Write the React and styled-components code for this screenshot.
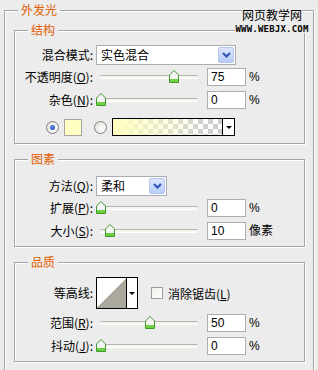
import React from 'react';
import styled, {createGlobalStyle} from 'styled-components';

const GlobalStyle = createGlobalStyle`
html, body {
    margin: 0;
    padding: 0;
    background: #ececec;
}
body {
    font-family: "Noto Sans CJK SC", "Liberation Sans", sans-serif;
    font-size: 12px;
    color: #000;
}
`;

const Page = styled.div`
position: relative;
width: 318px;
height: 370px;
overflow: hidden;
box-sizing: border-box;
padding: 10px 0 0 4px;
`;

const Frame = styled.div`
position: relative;
border: 1px solid #a4a4a4;
box-shadow: inset 1px 1px 0 #fff, 1px 1px 0 #fff;
`;

const Outer = styled(Frame)`
width: 310px;
box-sizing: border-box;
padding: 19px 8px 14px 9px;
display: flex;
flex-direction: column;
`;

const Section = styled(Frame)`
padding: ${p => p.$pt}px 0 ${p => p.$pb}px 0;
display: flex;
flex-direction: column;
& + & {
    margin-top: 15px;
}
`;

const Title = styled.span`
position: absolute;
left: 13px;
top: -8px;
padding: 0 3px;
line-height: 14px;
background: #ececec;
color: #e35d00;
`;

const Row = styled.div`
display: flex;
align-items: center;
height: ${p => p.$h}px;
margin-top: ${p => p.$mt || 0}px;
padding-left: ${p => p.$pl || 0}px;
`;

const Label = styled.span`
width: 78px;
flex-shrink: 0;
margin-right: 3px;
text-align: right;
white-space: nowrap;
line-height: 14px;
u {
    text-underline-offset: 1px;
}
`;

const SelectBox = styled.div`
width: ${p => p.$w}px;
height: 20px;
box-sizing: border-box;
border: 1px solid #a9adb3;
background: #fff;
display: flex;
align-items: center;
justify-content: space-between;
padding: 0 1px 0 4px;
line-height: 14px;
`;

const SelectButton = styled.div`
width: 16px;
height: 16px;
box-sizing: border-box;
border: 1px solid #b3c5ef;
border-radius: 2px;
background: linear-gradient(#dce6fd, #b8ccf8);
display: flex;
align-items: center;
justify-content: center;
`;

const SliderBox = styled.div`
position: relative;
width: 106px;
height: 14px;
margin-right: 5px;
display: flex;
align-items: center;
`;

const Track = styled.div`
flex: 1;
margin: 0 4px;
height: 2px;
border-radius: 2px;
background: #f6f6ec;
border-top: 1px solid #b4b4b4;
border-bottom: 1px solid #fff;
`;

const Thumb = styled.svg`
position: absolute;
top: 0;
`;

const NumBox = styled.div`
width: 39px;
height: 18px;
box-sizing: border-box;
border: 1px solid #adadad;
background: #fff;
padding-left: 3px;
font: 12px/16px "Liberation Sans", sans-serif;
`;

const Unit = styled.span`
margin-left: 3px;
font-family: "Liberation Sans", "Noto Sans CJK SC", sans-serif;
font-size: 12px;
line-height: 14px;
`;

const Radio = styled.span`
width: 13px;
height: 13px;
box-sizing: border-box;
border-radius: 50%;
border: 1px solid #808080;
background: radial-gradient(circle at 65% 65%, #fff, #dcdcd6);
display: flex;
align-items: center;
justify-content: center;
margin-right: 5px;
&::after {
    content: '';
    width: 5px;
    height: 5px;
    border-radius: 50%;
    background: ${p => p.$on ? 'radial-gradient(circle at 40% 40%, #5a86e8, #1f46b0)' : 'transparent'};
}
`;

const Swatch = styled.span`
width: 18px;
height: 17px;
box-sizing: border-box;
border: 1px solid #a4a4a4;
background: #ffffc4;
margin-right: 12px;
`;

const GradientBox = styled.div`
width: 123px;
height: 18px;
box-sizing: border-box;
border: 1px solid #000;
display: flex;
`;

const GradientFill = styled.div`
flex: 1;
background:
    linear-gradient(to right, #ffffc0 0%, rgba(255, 255, 192, 0) 85%),
    conic-gradient(#cfcfcf 25%, #fff 0 50%, #cfcfcf 0 75%, #fff 0) 0 0 / 10px 10px;
`;

const DropArrow = styled.div`
width: ${p => p.$w}px;
border-left: 1px solid #000;
background: #fff;
display: flex;
align-items: center;
justify-content: center;
&::after {
    content: '';
    border-left: 3px solid transparent;
    border-right: 3px solid transparent;
    border-top: 3px solid #000;
}
`;

const Contour = styled.div`
width: 42px;
height: 32px;
box-sizing: border-box;
border: 1px solid #000;
display: flex;
margin-right: 13px;
`;

const ContourCurve = styled.div`
flex: 1;
background: linear-gradient(to bottom right, #fff 50%, #aba99e 50%);
`;

const CheckBox = styled.span`
width: 12px;
height: 12px;
box-sizing: border-box;
border: 1px solid #9c9c9c;
background: linear-gradient(135deg, #f0f0ea, #fff);
margin-right: 5px;
`;

const Watermark = styled.div`
position: absolute;
top: 8px;
left: 236px;
width: 72px;
display: flex;
flex-direction: column;
align-items: center;
`;

const WmTitle = styled.span`
font-size: 12px;
line-height: 14px;
background: #ececec;
`;

const WmUrl = styled.span`
margin-top: 3px;
font: bold 9px/8px "DejaVu Sans Mono", monospace;
letter-spacing: 0.2px;
background: #ececec;
`;

const Chevron = () => (
    <svg width="9" height="6" viewBox="0 0 9 6">
        <path d="M1 1 L4.5 4.5 L8 1" fill="none" stroke="#2c52b5" strokeWidth="2"/>
    </svg>
);

const Select = ({width, value}) => (
    <SelectBox $w={width}>
        <span>{value}</span>
        <SelectButton><Chevron/></SelectButton>
    </SelectBox>
);

const SliderRow = ({label, pos, value, unit}) => (
    <Row $h={23}>
        <Label>{label}</Label>
        <SliderBox>
            <Track/>
            <Thumb width="10" height="13" viewBox="0 0 10 13" style={{left: `${pos * 0.97}px`}}>
                <path d="M0.5 12.5 V5 L5 0.5 L9.5 5 V12.5 Z" fill="#f4f4f4" stroke="#3f9a2a"/>
                <rect x="1" y="9" width="8" height="3" fill="#6fd044"/>
            </Thumb>
        </SliderBox>
        <NumBox>{value}</NumBox>
        <Unit>{unit}</Unit>
    </Row>
);

const App = () => (
    <Page>
        <GlobalStyle/>
        <Outer>
            <Title>外发光</Title>
            <Section $pt={14} $pb={7}>
                <Title>结构</Title>
                <Row $h={20}>
                    <Label>混合模式:</Label>
                    <Select width={140} value="实色混合"/>
                </Row>
                <SliderRow label={<>不透明度(<u>O</u>):</>} pos={75} value="75" unit="%"/>
                <SliderRow label={<>杂色(<u>N</u>):</>} pos={0} value="0" unit="%"/>
                <Row $h={18} $mt={7} $pl={31}>
                    <Radio $on/>
                    <Swatch/>
                    <Radio/>
                    <GradientBox>
                        <GradientFill/>
                        <DropArrow $w={11}/>
                    </GradientBox>
                </Row>
            </Section>
            <Section $pt={16} $pb={4}>
                <Title>图素</Title>
                <Row $h={20}>
                    <Label>方法(<u>Q</u>):</Label>
                    <Select width={71} value="柔和"/>
                </Row>
                <SliderRow label={<>扩展(<u>P</u>):</>} pos={0} value="0" unit="%"/>
                <SliderRow label={<>大小(<u>S</u>):</>} pos={9.3} value="10" unit="像素"/>
            </Section>
            <Section $pt={14} $pb={4}>
                <Title>品质</Title>
                <Row $h={32}>
                    <Label>等高线:</Label>
                    <Contour>
                        <ContourCurve/>
                        <DropArrow $w={10}/>
                    </Contour>
                    <CheckBox/>
                    <span>消除锯齿(<u>L</u>)</span>
                </Row>
                <Row $h={2}/>
                <SliderRow label={<>范围(<u>R</u>):</>} pos={50} value="50" unit="%"/>
                <SliderRow label={<>抖动(<u>J</u>):</>} pos={0} value="0" unit="%"/>
            </Section>
        </Outer>
        <Watermark>
            <WmTitle>网页教学网</WmTitle>
            <WmUrl>WWW.WEBJX.COM</WmUrl>
        </Watermark>
    </Page>
);

export default App;
